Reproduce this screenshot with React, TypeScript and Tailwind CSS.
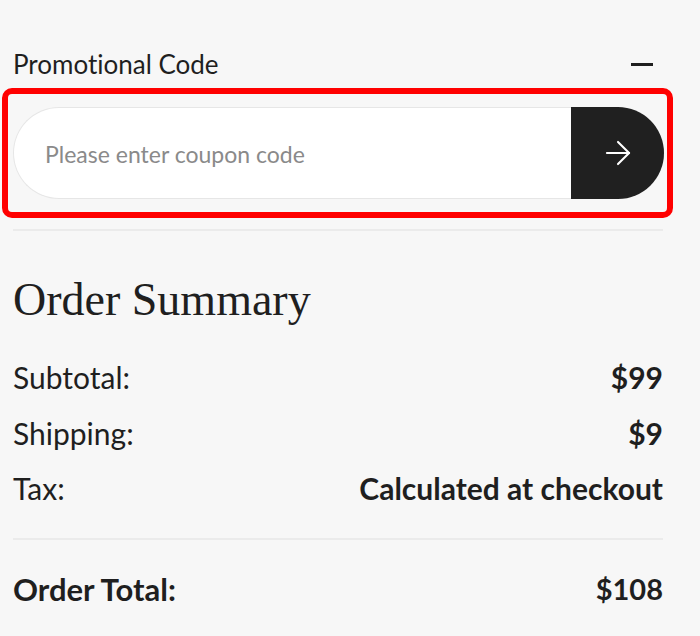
import { ArrowRight } from 'lucide-react';

const rows = [
  { label: 'Subtotal:', value: '$99' },
  { label: 'Shipping:', value: '$9' },
  { label: 'Tax:', value: 'Calculated at checkout' },
];

const App = () => {
  return (
    <div className="min-h-[636px] w-[700px] bg-[#f7f7f7] font-['Lato','Liberation_Sans',sans-serif] text-[#1f1f1f] [font-variant-ligatures:none]">
      <div className="pl-[13px] pr-[37px] pt-[46px]">
        {/* Promo code */}
        <div className="flex items-center justify-between">
          <h3 className="text-[26px] leading-[36px]">Promotional Code</h3>
          <span className="mr-[10px] block h-[3px] w-[22px] bg-[#1f1f1f]" />
        </div>

        <div className="-ml-[11px] -mr-[10px] mt-[6px] rounded-[10px] border-[6px] border-[#ff0000] py-[13px] pl-[5px] pr-[3px]">
          <div className="flex h-[92px]">
            <input
              type="text"
              placeholder="Please enter coupon code"
              className="h-full min-w-0 flex-1 rounded-l-full border border-r-0 border-[#e6e6e6] bg-white pl-[31px] pt-[2px] text-[23px] outline-none placeholder:text-[#8a8a8a]"
            />
            <button className="flex w-[93px] items-center justify-center rounded-r-full bg-[#202020] text-white">
              <ArrowRight size={38} strokeWidth={1.3} />
            </button>
          </div>
        </div>

        <div className="mt-[11px] h-[2px] bg-[#ebebeb]" />

        {/* Summary */}
        <h2 className="mt-[43px] font-['Liberation_Serif',serif] text-[46px] leading-[52px]">
          Order Summary
        </h2>

        <div className="mt-[32px] flex flex-col gap-[17.5px]">
          {rows.map((row) => (
            <div key={row.label} className="flex items-center justify-between text-[30px] leading-[38px]">
              <span>{row.label}</span>
              <span className="font-bold">{row.value}</span>
            </div>
          ))}
        </div>

        <div className="mt-[31px] h-[2px] bg-[#ebebeb]" />

        <div className="mt-[30px] flex items-center justify-between font-bold leading-[38px]">
          <span className="text-[31px]">Order Total:</span>
          <span className="text-[29px]">$108</span>
        </div>
      </div>
    </div>
  );
};

export default App;
